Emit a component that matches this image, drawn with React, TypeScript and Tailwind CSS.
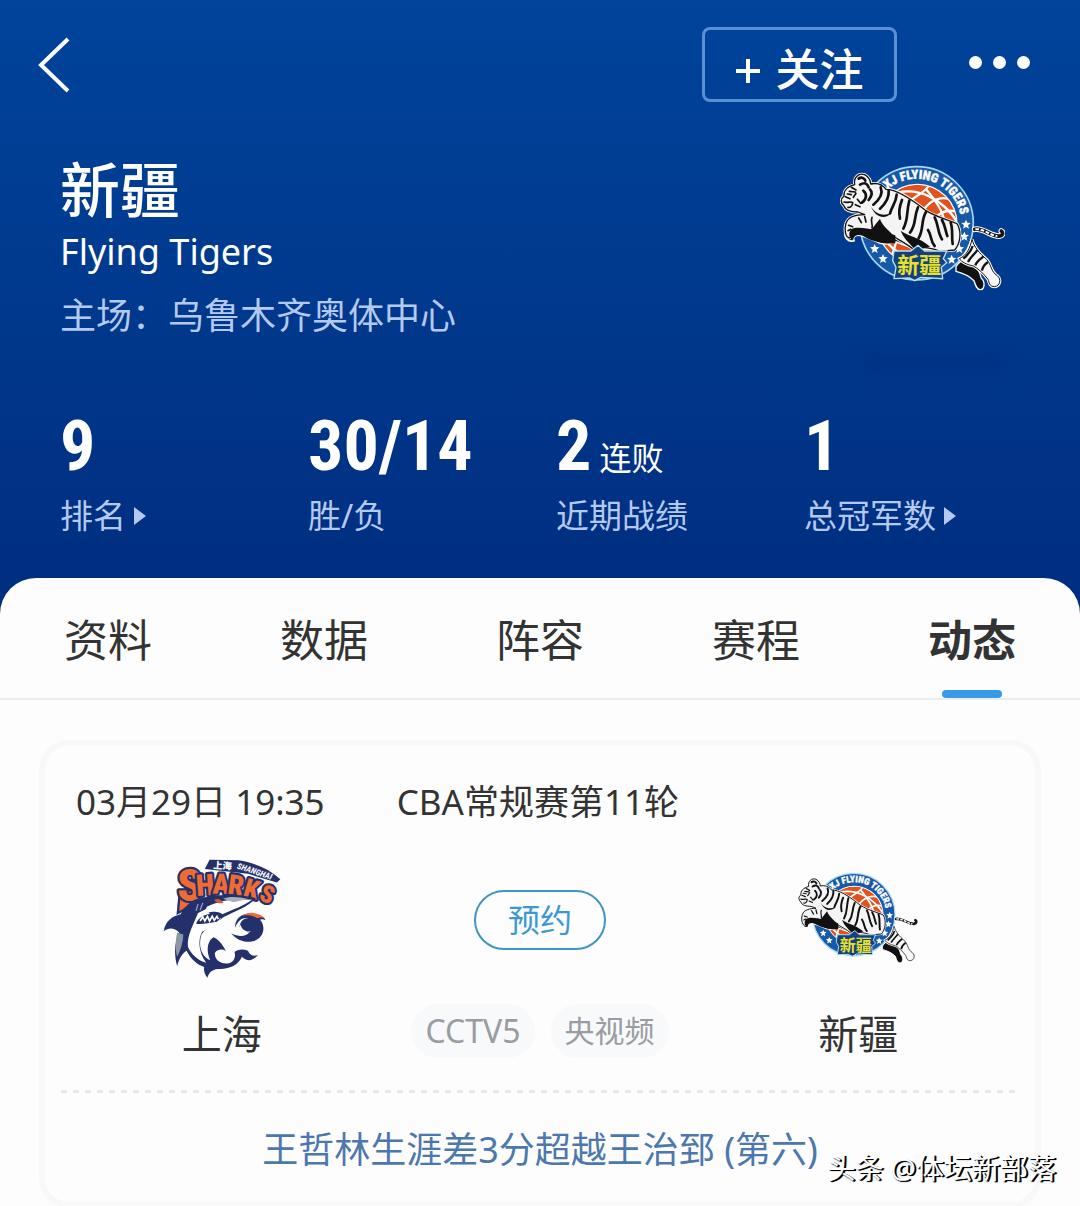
// 球队主页：头部信息 + 选项卡 + 动态赛程卡片

import React, { useState } from 'react';

interface Stat {
    value: string;
    suffix?: string;
    label: string;
    arrow?: boolean;
}

const STATS: Stat[] = [
    { value: '9', label: '排名', arrow: true },
    { value: '30/14', label: '胜/负' },
    { value: '2', suffix: '连败', label: '近期战绩' },
    { value: '1', label: '总冠军数', arrow: true },
];

const TABS = ['资料', '数据', '阵容', '赛程', '动态'];

// 飞虎队标
const TigersLogo: React.FC<{ id: string; className: string }> = ({ id, className }) => (
    <svg className={className} viewBox="60 45 495 378" role="img" aria-label="新疆">
        <defs>
            <path id={id} d="M202 119 A134 134 0 0 1 419 255" />
            <clipPath id={`${id}-ball`}>
                <circle cx="292" cy="222" r="118" />
            </clipPath>
        </defs>
        {/* 圆环 */}
        <circle cx="290" cy="220" r="170" fill="#1659a8" stroke="#a5d8f5" strokeWidth="5" />
        <circle cx="292" cy="222" r="121" fill="#fff" />
        {/* 篮球 */}
        <g clipPath={`url(#${id}-ball)`}>
            <circle cx="292" cy="222" r="118" fill="#e2521f" />
            <g fill="none" stroke="#fff" strokeWidth="7">
                <path d="M232 128 C300 112 370 150 412 216" />
                <path d="M264 160 C285 135 318 128 328 104" />
                <path d="M318 118 C345 150 368 180 372 212" />
                <path d="M310 180 C335 145 370 138 395 150" />
                <path d="M345 205 C365 182 388 178 412 186" />
                <path d="M190 262 C215 300 245 320 290 325" />
                <path d="M215 320 C222 300 226 285 230 270" />
            </g>
        </g>
        <g fill="#fff" stroke="#fff" fontFamily='"Roboto Condensed", Roboto, sans-serif' fontWeight="900" fontSize="38">
            <text>
                <textPath href={`#${id}`}>XJ FLYING TIGERS</textPath>
            </text>
        </g>
        {/* 星星 */}
        <g fill="#fff">
            <path id={`${id}-star`} d="M438 209l4 9 10 1-8 7 3 10-9-5-9 5 3-10-8-7 10-1z" />
            <use href={`#${id}-star`} x="-5" y="36" />
            <use href={`#${id}-star`} x="-20" y="73" />
            <use href={`#${id}-star`} x="-43" y="105" />
            <use href={`#${id}-star`} x="-274" y="73" />
            <use href={`#${id}-star`} x="-249" y="103" />
        </g>
        {/* 尾巴 */}
        <path d="M464 238 C490 232 515 262 540 258 C550 255 550 247 544 243" fill="none" stroke="#fff" strokeWidth="17" strokeLinecap="round" />
        <path d="M464 238 C490 232 515 262 540 258 C550 255 550 247 544 243" fill="none" stroke="#161616" strokeWidth="11" strokeLinecap="round" />
        <path d="M466 238 C490 234 512 258 532 258" fill="none" stroke="#fff" strokeWidth="6" strokeDasharray="11 5" />
        {/* 后腿 */}
        <path d="M408 350 C425 325 440 325 462 345 C475 352 480 370 484 385 C496 395 494 418 482 419 C470 420 466 405 462 392 C446 376 424 368 408 364z" fill="#111" stroke="#fff" strokeWidth="4" />
        <path d="M456 268 C462 290 478 310 500 328 C515 345 512 365 532 377 C545 388 540 408 524 410 C508 410 508 398 504 388 C490 370 475 356 460 348 C440 344 425 336 418 326 C440 316 450 295 456 268z" fill="#f7f7f7" stroke="#fff" strokeWidth="9" />
        <path d="M456 268 C462 290 478 310 500 328 C515 345 512 365 532 377 C545 388 540 408 524 410 C508 410 508 398 504 388 C490 370 475 356 460 348 C440 344 425 336 418 326 C440 316 450 295 456 268z" fill="#f7f7f7" stroke="#111" strokeWidth="3" />
        <path d="M472 300 C465 312 452 320 444 336 M490 320 C480 328 470 334 466 346 M504 336 C495 342 488 350 486 362 M458 288 C454 302 444 314 430 326" fill="none" stroke="#111" strokeWidth="7" />
        {/* 腹部阴影 */}
        <path d="M102 205 C150 200 180 215 230 250 L350 292 C320 304 270 294 228 276 C205 282 186 286 168 274 L128 258 C108 250 96 262 102 272 C84 278 72 262 76 248z" fill="#101010" stroke="#fff" strokeWidth="5" />
        {/* 身体 */}
        <path d="M104 104 C100 82 116 68 134 74 C148 82 152 94 152 102 C170 98 188 104 198 118 C230 118 268 142 318 182 C350 202 392 212 412 222 C426 248 420 282 404 300 L360 304 C330 292 300 290 282 300 C262 280 230 268 206 250 C176 244 160 242 142 240 C122 238 108 236 102 242 C92 250 98 262 88 264 C76 262 72 238 78 220 C84 200 110 194 134 194 L114 186 C94 186 76 182 72 168 C60 158 62 146 72 138 C70 124 80 110 104 104z" fill="#f8f8f8" stroke="#fff" strokeWidth="9" strokeLinejoin="round" />
        <path d="M104 104 C100 82 116 68 134 74 C148 82 152 94 152 102 C170 98 188 104 198 118 C230 118 268 142 318 182 C350 202 392 212 412 222 C426 248 420 282 404 300 L360 304 C330 292 300 290 282 300 C262 280 230 268 206 250 C176 244 160 242 142 240 C122 238 108 236 102 242 C92 250 98 262 88 264 C76 262 72 238 78 220 C84 200 110 194 134 194 L114 186 C94 186 76 182 72 168 C60 158 62 146 72 138 C70 124 80 110 104 104z" fill="#f4f4f4" stroke="#111" strokeWidth="4" strokeLinejoin="round" />
        {/* 条纹 */}
        <g fill="none" stroke="#111" strokeWidth="8" strokeLinecap="round">
            <path d="M182 112 C190 132 180 148 160 164" />
            <path d="M206 122 C208 142 200 158 180 176" />
            <path d="M230 134 C228 160 216 168 210 190" />
            <path d="M246 150 C236 175 236 190 240 206" />
            <path d="M268 152 C258 190 266 206 250 236" />
            <path d="M294 172 C280 205 290 222 270 248" />
            <path d="M318 186 C302 212 312 238 296 264" />
            <path d="M344 202 C356 225 352 245 366 268" />
            <path d="M366 210 C376 228 376 242 382 258" />
            <path d="M392 218 C400 240 394 262 398 282" />
            <path d="M324 240 C336 258 330 272 344 288" />
            <path d="M120 104 C134 96 142 100 146 112" />
            <path d="M116 86 C124 80 134 84 136 92" />
            <path d="M150 118 C160 128 154 140 146 150" />
            <path d="M130 122 C142 132 140 148 126 158" />
        </g>
        <g fill="none" stroke="#111" strokeWidth="5" strokeLinecap="round">
            <path d="M94 112 l14 8 M88 124 l18 2 M108 130 l-8 12 M76 140 l14 6 M72 156 C84 160 94 152 98 158 C98 168 90 174 84 172" />
            <path d="M112 148 l10 12 M106 164 l14 6 M82 132 l12 2" />
            <path d="M116 204 l8 14 M134 200 l4 16 M156 202 C150 216 160 224 156 234 M86 226 l12 4 M84 242 l8 -4" />
        </g>
        <path d="M152 168 C164 190 184 200 214 190 C196 208 168 206 152 168z M180 206 C186 226 204 238 222 258 L150 244z" fill="#111" />
        <path d="M94 238 C110 228 140 236 168 240 L226 256 L226 280 C190 284 150 272 130 258 C112 250 100 258 100 270 C86 266 84 248 94 238z" fill="#111" />
        <path d="M242 242 C272 262 300 262 330 290 L286 300 C270 280 252 268 242 242z" fill="#111" />
        {/* 底部铭牌 */}
        <path d="M222 303 L272 303 L294 286 L314 303 L380 303 L370 326 L380 338 L364 352 L368 386 L302 382 L284 392 L268 384 L222 386 L228 352 L218 332z" fill="#14407e" stroke="#b8e4f4" strokeWidth="4" />
        <text x="232" y="370" fill="#e8e22a" fontFamily='"Noto Sans CJK SC", sans-serif' fontWeight="700" fontSize="66">
            新疆
        </text>
    </svg>
);

// 大鲨鱼队标
const SharksLogo: React.FC<{ className: string }> = ({ className }) => (
    <svg className={className} viewBox="38 30 350 354" role="img" aria-label="上海">
        <path d="M162 62 L176 34 L262 36 C310 44 350 60 386 92 L376 102 L290 76z" fill="#24306c" />
        <text x="186" y="60" transform="rotate(4 186 60)" fill="#fff" fontFamily='"Noto Sans CJK SC", sans-serif' fontWeight="900" fontSize="28">上海</text>
        <text x="256" y="60" transform="rotate(18 256 60)" fill="#fff" fontFamily='"Roboto Condensed", Roboto, sans-serif' fontWeight="700" fontStyle="italic" fontSize="25">SHANGHAI</text>
        {/* 字母 */}
        <path d="M88 128 L82 192 L98 184 L130 160 L132 124z" fill="#ee6b34" stroke="#24306c" strokeWidth="7" />
        <g
            fill="#ee6b34"
            stroke="#24306c"
            strokeWidth="13"
            strokeLinejoin="round"
            paintOrder="stroke"
            fontFamily='"Roboto Condensed", Roboto, sans-serif'
            fontWeight="900"
        >
            <text x="80" y="156" fontSize="132">S</text>
            <text x="138" y="142" transform="rotate(-4 138 142)" fontSize="88">H</text>
            <text x="184" y="134" transform="rotate(2 184 134)" fontSize="84">A</text>
            <text x="228" y="134" transform="rotate(8 228 134)" fontSize="82">R</text>
            <text x="273" y="141" transform="rotate(16 273 141)" fontSize="78">K</text>
            <text x="320" y="152" transform="rotate(22 320 152)" fontSize="72">S</text>
        </g>
        {/* 鲨鱼身体 */}
        <path d="M314 148 C262 136 196 134 134 152 C112 162 102 178 90 196 C64 202 46 216 40 246 C56 234 72 236 86 250 C72 280 70 314 80 350 C86 326 96 310 108 304 C122 332 142 346 160 352 C158 364 162 374 170 384 C174 368 184 360 200 358 C236 360 262 346 272 322 C288 338 306 334 320 316 C308 322 296 318 290 304 C276 298 258 300 250 308 C256 326 244 342 226 342 C204 342 190 328 192 310 C200 300 212 298 224 304 C214 284 204 272 188 264 C168 276 166 308 178 332 C150 320 142 286 152 256 C166 236 196 222 218 204 C252 186 290 174 314 148z" fill="#24306c" />
        {/* 腹部 */}
        <path d="M142 192 C128 226 108 262 112 292 C122 316 142 332 166 340 C142 306 142 270 154 248 L196 228 L210 206 C196 206 176 200 166 180z" fill="#fff" />
        <path d="M302 153 C256 148 206 154 168 174 L160 194 C184 186 206 186 214 196 C246 182 280 170 302 153z" fill="#fff" />
        <path d="M290 151 C262 143 234 142 216 150 L248 160z" fill="#a9b0b8" />
        <path d="M80 250 C74 278 74 300 80 322 C90 302 98 278 98 256z" fill="#8d96a6" />
        {/* 嘴和牙齿 */}
        <path d="M136 224 C144 200 172 192 206 192 C214 198 210 208 198 218 C174 222 156 226 136 224z" fill="#24306c" />
        <path d="M148 216 l8 -12 6 12 8 -14 6 14 8 -14 6 12 8 -12 4 8" fill="none" stroke="#fff" strokeWidth="5" />
        <path d="M190 154 C200 146 212 154 218 162 C206 166 196 162 190 154z" fill="#d85a2d" />
        <path d="M142 166 l-6 20 M156 162 l-8 22" stroke="#8d9bc4" strokeWidth="4" fill="none" />
        {/* 篮球 */}
        <path d="M252 236 C250 204 282 188 308 196 C326 196 340 206 342 214 C336 210 330 210 326 212 C346 236 334 270 304 276 C280 282 258 272 240 252 C262 264 284 262 294 250 C270 252 260 240 268 222 C272 214 280 208 290 208 C272 204 260 216 252 236z" fill="#24306c" />
        <path d="M274 200 C292 186 322 190 340 208 C330 204 322 206 318 208 C304 198 290 198 274 200z" fill="#ee6b34" />
        <path d="M268 226 C270 240 284 250 300 246 C288 254 268 254 262 240z" fill="#fff" />
    </svg>
);

const Caret: React.FC = () => (
    <svg className="w-3 h-[18px]" viewBox="0 0 12 18" fill="currentColor" aria-hidden="true"><path d="M0 0 L12 9 L0 18z" /></svg>
);

const App: React.FC = () => {
    const [active, setActive] = useState('动态');

    return (
        <div className="relative bg-[#fdfdfd] pb-1 text-[#333] font-['Noto_Sans','Noto_Sans_CJK_SC',sans-serif]">
            {/* 头部 */}
            <header className="bg-linear-to-b from-[#00449b] to-[#002d7f] pt-[27px] pb-[78px] text-white">
                <div className="flex items-center pl-9 pr-[50px]">
                    <button type="button" aria-label="返回">
                        <svg className="w-9 h-14" viewBox="0 0 36 56" fill="none" stroke="currentColor" strokeWidth="4"><path d="M32 2 L5 28 L32 54" /></svg>
                    </button>
                    <button type="button" className="ml-auto w-[195px] h-[75px] flex items-center justify-center gap-4 rounded-lg border-3 border-[#5b8fd3] pt-2 text-[44px] font-medium">
                        <svg className="mt-1 w-6 h-6" viewBox="0 0 24 24" stroke="currentColor" strokeWidth="4" aria-hidden="true"><path d="M0 12 H24 M12 0 V24" /></svg>
                        <span>关注</span>
                    </button>
                    <button type="button" aria-label="更多" className="ml-[72px] pb-1 flex gap-[11px]">
                        <span className="w-[13px] h-[13px] rounded-full bg-white" />
                        <span className="w-[13px] h-[13px] rounded-full bg-white" />
                        <span className="w-[13px] h-[13px] rounded-full bg-white" />
                    </button>
                </div>

                <div className="mt-[58px] flex justify-between pl-15 pr-[75px]">
                    <div>
                        <h1 className="text-[60px] leading-[60px] font-medium">新疆</h1>
                        <p className="mt-2 text-4xl leading-12">Flying Tigers</p>
                        <p className="mt-5 text-4xl leading-10 text-[#b3c9ef]">主场：乌鲁木齐奥体中心</p>
                    </div>
                    <div className="pt-[5px]">
                        <TigersLogo id="tigers-head" className="w-[165px] h-[126px]" />
                        <div className="mt-16 ml-5 w-36 h-3 rounded-full bg-[#002a78]/50 blur-sm" />
                    </div>
                </div>

                <dl className="mt-[49px] grid grid-cols-4 pl-15 pr-7">
                    {STATS.map((stat) => (
                        <div key={stat.label} className="flex flex-col-reverse gap-5">
                            <dt className="flex items-center gap-2 text-[33px] leading-10 text-[#b3c9ef]">
                                {stat.label}
                                {stat.arrow && <Caret />}
                            </dt>
                            <dd className="flex h-15 items-baseline gap-2 text-[70px] leading-[60px] font-bold font-['Roboto_Condensed','Roboto',sans-serif]">
                                {stat.value}
                                {stat.suffix && <span className="text-[32px] font-normal font-['Noto_Sans_CJK_SC',sans-serif]">{stat.suffix}</span>}
                            </dd>
                        </div>
                    ))}
                </dl>
            </header>

            <main className="relative -mt-9 rounded-t-[36px] bg-[#fdfdfd]">
                {/* 选项卡 */}
                <nav className="grid grid-cols-5 border-b-2 border-[#ebedef]">
                    {TABS.map((tab) => (
                        <button
                            key={tab}
                            type="button"
                            onClick={() => setActive(tab)}
                            className={`flex flex-col items-center pt-8 text-[44px] leading-[60px] ${active === tab ? 'font-bold' : ''}`}
                        >
                            {tab}
                            <span className={`mt-5 w-15 h-2 rounded-full ${active === tab ? 'bg-[#359be9]' : ''}`} />
                        </button>
                    ))}
                </nav>

                {/* 比赛卡片 */}
                <article className="mx-[45px] mt-[46px] rounded-3xl bg-[#fdfdfd] pt-9 pb-8 shadow-[0_0_0_6px_#f8f8f8]">
                    <div className="flex gap-18 px-[31px] text-[35px] leading-10">
                        <time dateTime="03-29T19:35">03月29日 19:35</time>
                        <span>CBA常规赛第11轮</span>
                    </div>

                    <div className="mt-9 grid grid-cols-[5fr_4fr_5fr]">
                        <div className="flex flex-col items-center">
                            <SharksLogo className="w-[118px] h-30" />
                            <span className="mt-9 text-[40px] leading-10">上海</span>
                        </div>
                        <div className="flex flex-col items-center pt-8">
                            <button type="button" className="w-[132px] h-15 rounded-full border-2 border-[#3f95c6] text-[32px] leading-10 text-[#3b98d3]">预约</button>
                            <div className="mt-[54px] flex gap-4 text-[30px] leading-[54px] text-[#999ca0]">
                                <span className="rounded-full bg-[#f7f9fa] px-[14px] text-[32px]">CCTV5</span>
                                <span className="rounded-full bg-[#f7f9fa] px-[14px]">央视频</span>
                            </div>
                        </div>
                        <div className="flex flex-col items-center">
                            <TigersLogo id="tigers-card" className="w-30 h-30" />
                            <span className="mt-9 text-[40px] leading-10">新疆</span>
                        </div>
                    </div>

                    <div className="mx-4 mt-8 h-[3px] bg-[repeating-linear-gradient(90deg,#e8e9ea_0_6px,transparent_6px_12px)]" />

                    <a href="#milestone" className="mt-[37px] block text-center text-4xl leading-10 text-[#4d78ae]">
                        王哲林生涯差3分超越王治郅 (第六)
                    </a>
                </article>
            </main>

            {/* 水印 */}
            <div className="absolute right-6 bottom-5 text-[28px] leading-9 text-white text-shadow-[1px_1px_1px_#000,2px_1px_0_#000]">头条 @体坛新部落</div>
        </div>
    );
};

export default App;
